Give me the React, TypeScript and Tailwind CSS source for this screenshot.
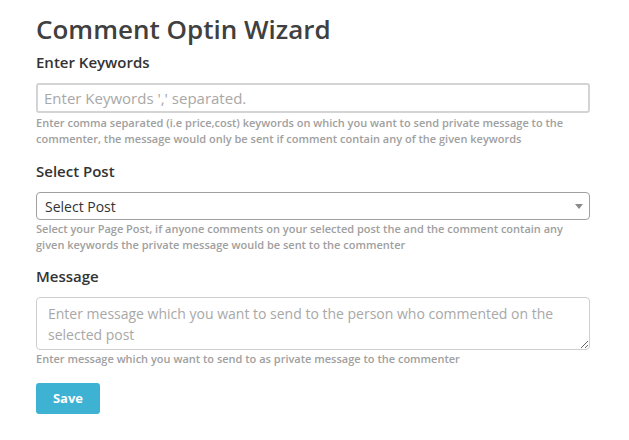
import React from "react";

const HelpText: React.FC<{ children: React.ReactNode; className?: string }> = ({ children, className }) => (
  <p className={"text-[11px] leading-[16px] font-semibold text-[#a0a0a0] " + (className ?? "")}>{children}</p>
);

const Label: React.FC<{ children: React.ReactNode; className?: string }> = ({ children, className }) => (
  <label className={"block text-[15px] leading-[20px] font-semibold text-[#333] " + (className ?? "")}>
    {children}
  </label>
);

export default function App() {
  return (
    <div
      className="w-[629px] h-[440px] bg-white px-9 pt-3"
      style={{ fontFamily: '"Open Sans", sans-serif' }}
    >
      <h1 className="text-[26px] leading-[34px] font-semibold text-[#404040]">Comment Optin Wizard</h1>

      {/* Keywords */}
      <Label className="mt-[6px]">Enter Keywords</Label>
      <input
        type="text"
        placeholder="Enter Keywords ',' separated."
        className="mt-[11px] block w-[554px] h-[30px] border-2 border-[#d4d4d4] rounded-[3px] pl-[6px] text-[15px] text-[#333] placeholder:text-[#a8a8a8] outline-none"
      />
      <HelpText className="mt-[2px]">
        Enter comma separated (i.e price,cost) keywords on which you want to send private message to the
        commenter, the message would only be sent if comment contain any of the given keywords
      </HelpText>

      {/* Post */}
      <Label className="mt-[14px]">Select Post</Label>
      <div className="relative mt-[11px] w-[554px] h-[28px] border border-[#a0a0a0] rounded-[4px] flex items-center pl-2">
        <span className="text-[14px] text-[#333]">Select Post</span>
        <span className="absolute right-[6px] top-[11px] w-0 h-0 border-l-[4px] border-r-[4px] border-t-[5px] border-l-transparent border-r-transparent border-t-[#8a8a8a]" />
      </div>
      <HelpText className="mt-[1px]">
        Select your Page Post, if anyone comments on your selected post the and the comment contain any
        given keywords the private message would be sent to the commenter
      </HelpText>

      {/* Message */}
      <Label className="mt-[13px]">Message</Label>
      <textarea
        placeholder="Enter message which you want to send to the person who commented on the selected post"
        className="mt-[11px] block w-[554px] h-[53px] overflow-hidden border border-[#cfcfcf] rounded-[4px] pl-[11px] pr-2 pt-[5px] text-[14px] leading-[21px] text-[#333] placeholder:text-[#a8a8a8] outline-none"
      />
      <HelpText className="mt-[1px]">
        Enter message which you want to send to as private message to the commenter
      </HelpText>

      <button className="mt-[16px] w-[64px] h-[31px] bg-[#3db2d3] rounded-[3px] text-white text-[13px] font-bold">
        Save
      </button>
    </div>
  );
}
